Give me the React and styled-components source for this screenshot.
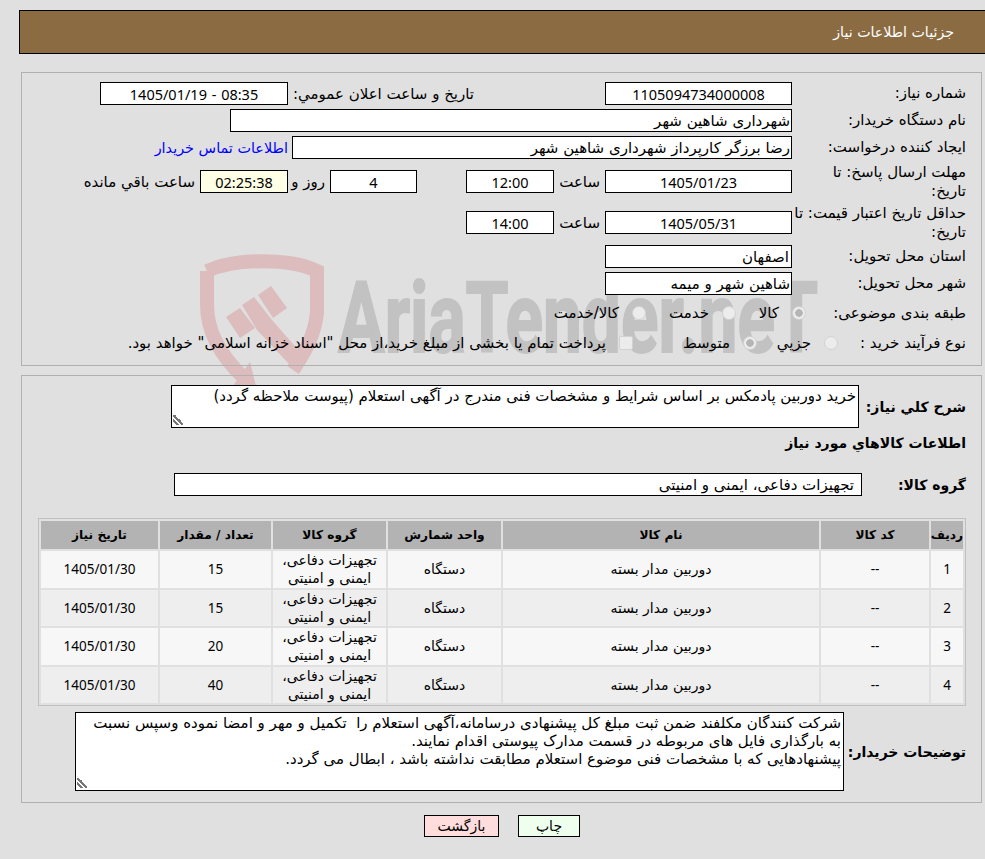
import React from 'react';
import styled, { createGlobalStyle } from 'styled-components';

const FONT = '"DejaVu Sans", "Noto Sans", sans-serif';

const GlobalStyle = createGlobalStyle`
  html, body {
    margin: 0;
    background: #e0e0e0;
  }
  body {
    font-family: ${FONT};
    font-size: 15px;
    color: #000;
  }
`;

const Page = styled.div`
  position: relative;
  direction: rtl;
  width: 985px;
  height: 859px;
  overflow: hidden;
  padding-top: 10px;
  box-sizing: border-box;
`;

const Watermark = styled.svg`
  position: absolute;
  left: 0;
  top: 0;
  width: 985px;
  height: 859px;
  pointer-events: none;
`;

const Header = styled.header`
  position: relative;
  height: 44px;
  margin-left: 19px;
  background: #8b6c42;
  border: 1px solid #000;
  border-right: 0;
  box-sizing: border-box;
  color: #fff;
  font-size: 14.2px;
  display: flex;
  align-items: center;
  padding-right: 31px;
`;

const Panel = styled.section`
  position: relative;
  margin: ${({ $top }) => $top}px 3px 0 0;
  width: 961px;
  box-sizing: border-box;
  border: 1px solid #b0b0b0;
  padding: ${({ $padTop }) => $padTop}px 15px ${({ $padBottom }) => $padBottom}px 0;
`;

const Row = styled.div`
  display: flex;
  align-items: center;
  height: ${({ $h }) => $h}px;
`;

const Label = styled.div`
  flex: none;
  width: ${({ $w }) => $w || 174}px;
  line-height: 19px;
  font-size: 15px;
  white-space: nowrap;
`;

const StrongLabel = styled.div`
  flex: none;
  width: ${({ $w }) => $w}px;
  font-weight: bold;
  font-size: 14px;
  line-height: 20px;
  white-space: nowrap;
`;

const Field = styled.div`
  flex: none;
  width: ${({ $w }) => $w}px;
  height: ${({ $h }) => $h || 23}px;
  margin-right: ${({ $gap }) => $gap || 0}px;
  box-sizing: border-box;
  border: 1px solid #000;
  background: ${({ $bg }) => $bg || '#fff'};
  display: flex;
  align-items: center;
  justify-content: ${({ $center }) => ($center ? 'center' : 'flex-start')};
  padding-right: ${({ $pad }) => $pad || 0}px;
  font-size: 15px;
  white-space: nowrap;
`;

const Value = styled.span`
  direction: ltr;
  font-family: "Noto Sans", "DejaVu Sans", sans-serif;
  font-size: 14.5px;
  word-spacing: 1px;
`;

const Caption = styled.div`
  flex: none;
  width: ${({ $w }) => ($w ? `${$w}px` : 'auto')};
  margin-right: ${({ $gap }) => $gap || 0}px;
  font-size: 15px;
  white-space: nowrap;
`;

const ContactLink = styled.a`
  margin-right: 4px;
  color: #0000ff;
  font-size: 14.4px;
  text-decoration: none;
  white-space: nowrap;
`;

const Radio = styled.input.attrs({ type: 'radio', disabled: true })`
  appearance: none;
  flex: none;
  width: 14px;
  height: 14px;
  margin: 0;
  border-radius: 50%;
  border: 1px solid #d2d2d2;
  background: ${({ checked }) => (checked ? 'radial-gradient(circle, #b5b5b5 0 3.5px, #ececec 4px)' : '#ececec')};
  box-sizing: border-box;
`;

const Checkbox = styled.input.attrs({ type: 'checkbox', disabled: true })`
  appearance: none;
  flex: none;
  width: 14px;
  height: 14px;
  margin: 0;
  border-radius: 2px;
  border: 1px solid #d2d2d2;
  background: #ececec;
  box-sizing: border-box;
`;

const OptionText = styled.div`
  flex: none;
  width: ${({ $w }) => ($w ? `${$w}px` : 'auto')};
  margin-right: 13px;
  font-size: 15px;
  white-space: nowrap;
`;

const NoteBox = styled.textarea.attrs({ readOnly: true })`
  flex: none;
  display: block;
  width: ${({ $w }) => $w}px;
  height: ${({ $h }) => $h}px;
  margin: 0;
  box-sizing: border-box;
  border: 1px solid #000;
  border-radius: 0;
  outline: 0;
  padding: 1px 2px;
  background: #fff;
  color: #000;
  direction: rtl;
  font-family: ${FONT};
  font-size: 15px;
  line-height: 18px;

  &::-webkit-resizer {
    background: linear-gradient(45deg, transparent 18%, #777 18% 32%, transparent 32% 42%, #777 42% 60%, transparent 60%) 1px 3px / 10px 10px no-repeat;
  }
`;

const SectionTitle = styled.div`
  height: 30px;
  display: flex;
  align-items: center;
  font-weight: bold;
  font-size: 14px;
`;

const GroupRow = styled.div`
  display: flex;
  align-items: center;
  margin-top: 15px;
`;

const ItemsTable = styled.table`
  width: 928px;
  margin: 22px 0 0 16px;
  border: 1px solid #c0c0c0;
  border-spacing: 2px;
  border-collapse: separate;
  table-layout: fixed;
  font-size: 14px;

  th {
    height: 28px;
    padding: 0;
    background: #b3b3b3;
    font-size: 12.2px;
    font-weight: bold;
  }
  td {
    height: 36.5px;
    padding: 0;
    text-align: center;
    line-height: 18px;
  }
  tbody tr:nth-child(odd) td {
    background: #f7f7f7;
  }
  tbody tr:nth-child(even) td {
    background: #eeeeee;
  }
`;

const Latin = styled.span`
  font-family: "Noto Sans", "DejaVu Sans", sans-serif;
  font-size: 13.5px;
`;

const NotesRow = styled.div`
  display: flex;
  align-items: center;
  margin-top: 6px;
`;

const Actions = styled.div`
  display: flex;
  justify-content: center;
  gap: 19px;
  margin: 12px 0 0 0;
  padding-left: 19px;
`;

const ActionButton = styled.button`
  width: ${({ $w }) => $w}px;
  height: 22px;
  padding: 0;
  border: 1px solid #000;
  border-radius: 0;
  background: ${({ $bg }) => $bg};
  color: #000;
  font-family: ${FONT};
  font-size: 14px;
`;

const rows = [
  { id: 1, qty: 15 },
  { id: 2, qty: 15 },
  { id: 3, qty: 20 },
  { id: 4, qty: 40 },
];

const columns = [
  { title: 'ردیف', width: 32 },
  { title: 'کد کالا', width: 108 },
  { title: 'نام کالا', width: 316 },
  { title: 'واحد شمارش', width: 113 },
  { title: 'گروه کالا', width: 113 },
  { title: 'تعداد / مقدار', width: 111 },
  { title: 'تاریخ نیاز', width: 117 },
];

const NOTES = `شرکت کنندگان مکلفند ضمن ثبت مبلغ کل پیشنهادی درسامانه،آگهی استعلام را  تکمیل و مهر و امضا نموده وسپس نسبت به بارگذاری فایل های مربوطه در قسمت مدارک پیوستی اقدام نمایند.
پیشنهادهایی که با مشخصات فنی موضوع استعلام مطابقت نداشته باشد ، ابطال می گردد.`;

const Logo = () => (
  <Watermark viewBox="0 0 985 859">
    <g fill="none" stroke="#dcbcbc" strokeWidth="14">
      <path d="M207 271 C235 258 290 258 317 271 L317 312 C315 335 305 352 293 370" />
      <path d="M207 271 L207 305 C207 335 225 360 244 378" />
    </g>
    <g fill="#dcbcbc">
      <polygon points="250,362 257,390 230,390" />
      <polygon points="226,317 240,308 255,328 240,338" />
      <polygon points="242,305 254,297 272,320 300,352 290,365 257,330" />
      <polygon points="258,295 271,286 287,308 273,318" />
    </g>
    <text
      x="338"
      y="352"
      direction="ltr"
      textLength="480"
      lengthAdjust="spacingAndGlyphs"
      fill="#c2c2c2"
      stroke="#c2c2c2"
      strokeWidth="2"
      fontFamily="Roboto, sans-serif"
      fontWeight="700"
      fontSize="98"
    >
      AriaTender.neT
    </text>
  </Watermark>
);

const App = () => (
  <Page>
    <GlobalStyle />
    <Logo />
    <Header>جزئیات اطلاعات نیاز</Header>

    <Panel $top={18} $padTop={7} $padBottom={8}>
      <Row $h={27}>
        <Label>شماره نیاز:</Label>
        <Field $w={187} $center><Value>1105094734000008</Value></Field>
        <Caption $w={186} $gap={131}>تاریخ و ساعت اعلان عمومي:</Caption>
        <Field $w={188} $center><Value>1405/01/19 - 08:35</Value></Field>
      </Row>
      <Row $h={27}>
        <Label>نام دستگاه خریدار:</Label>
        <Field $w={562} $pad={1}>شهرداری شاهین شهر</Field>
      </Row>
      <Row $h={27}>
        <Label>ایجاد کننده درخواست:</Label>
        <Field $w={500} $pad={1}>رضا برزگر کارپرداز شهرداری شاهین شهر</Field>
        <ContactLink href="#">اطلاعات تماس خریدار</ContactLink>
      </Row>
      <Row $h={41}>
        <Label>مهلت ارسال پاسخ: تا<br />تاریخ:</Label>
        <Field $w={187} $center><Value>1405/01/23</Value></Field>
        <Caption $w={46} $gap={5}>ساعت</Caption>
        <Field $w={88} $center><Value>12:00</Value></Field>
        <Field $w={87} $gap={49} $center><Value>4</Value></Field>
        <Caption $w={37} $gap={5}>روز و</Caption>
        <Field $w={88} $bg="#ffffe6" $center><Value>02:25:38</Value></Field>
        <Caption $gap={5}>ساعت باقي مانده</Caption>
      </Row>
      <Row $h={41}>
        <Label>حداقل تاریخ اعتبار قیمت: تا<br />تاریخ:</Label>
        <Field $w={187} $center><Value>1405/05/31</Value></Field>
        <Caption $w={46} $gap={5}>ساعت</Caption>
        <Field $w={88} $center><Value>14:00</Value></Field>
      </Row>
      <Row $h={27}>
        <Label>استان محل تحویل:</Label>
        <Field $w={187} $pad={2}>اصفهان</Field>
      </Row>
      <Row $h={27}>
        <Label>شهر محل تحویل:</Label>
        <Field $w={187} $pad={1}>شاهین شهر و میمه</Field>
      </Row>
      <Row $h={32}>
        <Label $w={160}>طبقه بندی موضوعی:</Label>
        <Radio checked readOnly />
        <OptionText $w={43}>کالا</OptionText>
        <Radio />
        <OptionText $w={63}>خدمت</OptionText>
        <Radio />
        <OptionText>کالا/خدمت</OptionText>
      </Row>
      <Row $h={28}>
        <Label $w={128}>نوع فرآیند خرید :</Label>
        <Radio />
        <OptionText $w={54}>جزیي</OptionText>
        <Radio checked readOnly />
        <OptionText $w={97}>متوسط</OptionText>
        <Checkbox />
        <OptionText>پرداخت تمام یا بخشی از مبلغ خرید،از محل "اسناد خزانه اسلامی" خواهد بود.</OptionText>
      </Row>
    </Panel>

    <Panel $top={9} $padTop={9} $padBottom={11}>
      <Row $h={43}>
        <StrongLabel $w={107}>شرح کلي نیاز:</StrongLabel>
        <NoteBox
          $w={688}
          $h={43}
          value="خرید دوربین پادمکس بر اساس شرایط و مشخصات فنی مندرج در آگهی استعلام (پیوست ملاحظه گردد)"
        />
      </Row>
      <SectionTitle>اطلاعات کالاهاي مورد نیاز</SectionTitle>
      <GroupRow>
        <StrongLabel $w={104}>گروه کالا:</StrongLabel>
        <Field $w={688} $h={23} $pad={7}>تجهیزات دفاعی، ایمنی و امنیتی</Field>
      </GroupRow>
      <ItemsTable>
        <colgroup>
          {columns.map((col) => <col key={col.title} style={{ width: col.width }} />)}
        </colgroup>
        <thead>
          <tr>
            {columns.map((col) => <th key={col.title}>{col.title}</th>)}
          </tr>
        </thead>
        <tbody>
          {rows.map((row) => (
            <tr key={row.id}>
              <td><Latin>{row.id}</Latin></td>
              <td><Latin>--</Latin></td>
              <td>دوربین مدار بسته</td>
              <td>دستگاه</td>
              <td>تجهیزات دفاعی،<br />ایمنی و امنیتی</td>
              <td><Latin>{row.qty}</Latin></td>
              <td><Latin>1405/01/30</Latin></td>
            </tr>
          ))}
        </tbody>
      </ItemsTable>
      <NotesRow>
        <StrongLabel $w={122}>توضیحات خریدار:</StrongLabel>
        <NoteBox $w={769} $h={79} value={NOTES} />
      </NotesRow>
    </Panel>

    <Actions>
      <ActionButton $w={62} $bg="#eeffee">چاپ</ActionButton>
      <ActionButton $w={75} $bg="#ffdddd">بازگشت</ActionButton>
    </Actions>
  </Page>
);

export default App;
